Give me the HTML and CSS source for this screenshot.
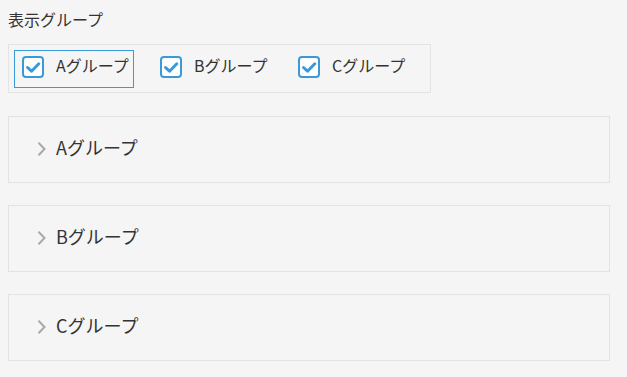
FILE: index.html
```html
<!DOCTYPE html>
<html lang="ja">
<head>
<meta charset="utf-8">
<link rel="stylesheet" href="styles.css">
</head>
<body>
<div class="page">
  <div class="label">表示グループ</div>
  <div class="filter">
    <label class="item selected">
      <span class="cb"><svg viewBox="0 0 22 22" width="22" height="22"><rect x="1" y="1" width="20" height="20" rx="3" fill="#fff" stroke="#3a9ad9" stroke-width="2"/><path d="M5.5 11.5 L9.5 15.2 L16.8 7.8" fill="none" stroke="#3a9ad9" stroke-width="3" stroke-linecap="round" stroke-linejoin="round"/></svg></span>
      <span class="txt">Aグループ</span>
    </label>
    <label class="item">
      <span class="cb"><svg viewBox="0 0 22 22" width="22" height="22"><rect x="1" y="1" width="20" height="20" rx="3" fill="#fff" stroke="#3a9ad9" stroke-width="2"/><path d="M5.5 11.5 L9.5 15.2 L16.8 7.8" fill="none" stroke="#3a9ad9" stroke-width="3" stroke-linecap="round" stroke-linejoin="round"/></svg></span>
      <span class="txt">Bグループ</span>
    </label>
    <label class="item">
      <span class="cb"><svg viewBox="0 0 22 22" width="22" height="22"><rect x="1" y="1" width="20" height="20" rx="3" fill="#fff" stroke="#3a9ad9" stroke-width="2"/><path d="M5.5 11.5 L9.5 15.2 L16.8 7.8" fill="none" stroke="#3a9ad9" stroke-width="3" stroke-linecap="round" stroke-linejoin="round"/></svg></span>
      <span class="txt">Cグループ</span>
    </label>
  </div>
  <div class="panels">
    <div class="panel">
      <svg class="chev" viewBox="0 0 12 16" width="12" height="16"><path d="M2.5 1.8 L8.5 8 L2.5 14.2" fill="none" stroke="#a8a8a8" stroke-width="2"/></svg>
      <span class="title">Aグループ</span>
    </div>
    <div class="panel">
      <svg class="chev" viewBox="0 0 12 16" width="12" height="16"><path d="M2.5 1.8 L8.5 8 L2.5 14.2" fill="none" stroke="#a8a8a8" stroke-width="2"/></svg>
      <span class="title">Bグループ</span>
    </div>
    <div class="panel">
      <svg class="chev" viewBox="0 0 12 16" width="12" height="16"><path d="M2.5 1.8 L8.5 8 L2.5 14.2" fill="none" stroke="#a8a8a8" stroke-width="2"/></svg>
      <span class="title">Cグループ</span>
    </div>
  </div>
</div>
</body>
</html>
```

FILE: styles.css
```css
html, body {
  margin: 0;
  padding: 0;
  background: #f5f5f5;
}
body {
  font-family: "Noto Sans CJK JP", "Noto Sans", sans-serif;
  color: #333;
}
.page {
  padding: 8px;
}
.label {
  font-size: 16px;
  line-height: 22px;
  margin-bottom: 14px;
}
.filter {
  display: flex;
  gap: 18px;
  width: 423px;
  box-sizing: border-box;
  border: 1px solid #e4e4e4;
  padding: 5px 5px 4px 5px;
}
.item {
  display: flex;
  align-items: center;
  gap: 12px;
  width: 120px;
  height: 38px;
  box-sizing: border-box;
  border: 1px solid transparent;
  padding: 0 3px 4px 7px;
  font-size: 16px;
}
.item.selected {
  border-color: #3a9ad9;
}
.cb {
  display: block;
  width: 22px;
  height: 22px;
}
.cb svg {
  display: block;
}
.txt {
  line-height: 22px;
  white-space: nowrap;
  margin-bottom: 5px;
}
.panels {
  display: flex;
  flex-direction: column;
  gap: 22px;
  margin-top: 23px;
}
.panel {
  display: flex;
  align-items: center;
  width: 602px;
  height: 67px;
  box-sizing: border-box;
  border: 1px solid #e2e2e2;
  padding-left: 27px;
  gap: 8px;
}
.chev {
  display: block;
  margin-bottom: 2px;
}
.title {
  font-size: 18px;
  line-height: 24px;
  white-space: nowrap;
  margin-bottom: 5px;
}
```
